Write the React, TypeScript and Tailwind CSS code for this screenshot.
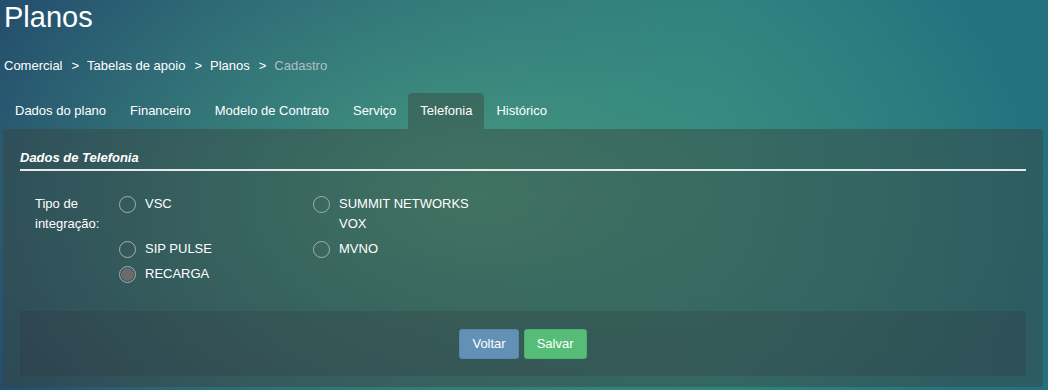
import React from 'react'

const crumbs = ['Comercial', 'Tabelas de apoio', 'Planos']
const tabs = ['Dados do plano', 'Financeiro', 'Modelo de Contrato', 'Serviço', 'Telefonia', 'Histórico']

function Radio({ label, checked }: { label: string; checked?: boolean }) {
	return (
		<label className="flex items-start gap-[9px] w-[194px]">
			<span className="mt-[2px] flex h-[17px] w-[17px] shrink-0 items-center justify-center rounded-full border-[1.5px] border-[#a9aeae]">
				{checked && <span className="h-[13px] w-[13px] rounded-full bg-[#6b6b6b]" />}
			</span>
			<span className="max-w-[140px] leading-[20px]">{label}</span>
		</label>
	)
}

export default function App() {
	return (
		<div className="h-[390px] w-[1048px] overflow-hidden font-['Liberation_Sans',Arial,sans-serif] text-white bg-[radial-gradient(ellipse_55%_85%_at_46%_50%,#47997f_0%,rgba(66,152,128,0.6)_40%,rgba(66,152,128,0)_100%),linear-gradient(to_right,#244e6d_0%,#2a6377_38%,#2a7a80_68%,#23707f_100%)]">
			<h1 className="px-[4px] pt-[1px] text-[29px] leading-[32px]">Planos</h1>

			<div className="mt-[25px] flex items-center px-[4px] text-[13px] leading-[16px]">
				{crumbs.map((c) => (
					<React.Fragment key={c}>
						<span>{c}</span>
						<span className="pl-[9px] pr-[8px]">&gt;</span>
					</React.Fragment>
				))}
				<span className="text-[#b3bec4]">Cadastro</span>
			</div>

			<div className="mt-[19px] flex px-[3px] text-[13px]">
				{tabs.map((t) => (
					<div
						key={t}
						className={
							t === 'Telefonia'
								? 'flex h-[36px] items-center rounded-t-[4px] bg-[rgba(57,66,59,0.44)] px-[12px]'
								: 'flex h-[36px] items-center px-[12px]'
						}
					>
						{t}
					</div>
				))}
			</div>

			<div className="mx-[3px] w-[1040px] rounded-b-[4px] rounded-tr-[4px] bg-[rgba(57,66,59,0.44)] px-[17px] pt-[21px] pb-[11px] text-[13px]">
				<div className="border-b-2 border-[#e3ecea] pb-[3px] text-[13px] font-bold italic leading-[16px]">
					Dados de Telefonia
				</div>

				<div className="mt-[23px] flex pl-[15px]">
					<div className="w-[84px] leading-[20px]">
						Tipo de
						<br />
						integração:
					</div>
					<div className="flex flex-col gap-[5px]">
						<div className="flex">
							<Radio label="VSC" />
							<Radio label="SUMMIT NETWORKS VOX" />
						</div>
						<div className="flex">
							<Radio label="SIP PULSE" />
							<Radio label="MVNO" />
						</div>
						<div className="flex">
							<Radio label="RECARGA" checked />
						</div>
					</div>
				</div>

				<div className="mt-[27px] flex h-[65px] items-center justify-center gap-[5px] bg-[rgba(50,46,55,0.22)]">
					<button className="h-[30px] rounded-[3px] border border-[#5a87a8] bg-[#6391b5] px-[12px] text-[13px] text-white">
						Voltar
					</button>
					<button className="h-[30px] rounded-[3px] border border-[#4fb170] bg-[#56bd78] px-[12px] text-[13px] text-white">
						Salvar
					</button>
				</div>
			</div>
		</div>
	)
}
